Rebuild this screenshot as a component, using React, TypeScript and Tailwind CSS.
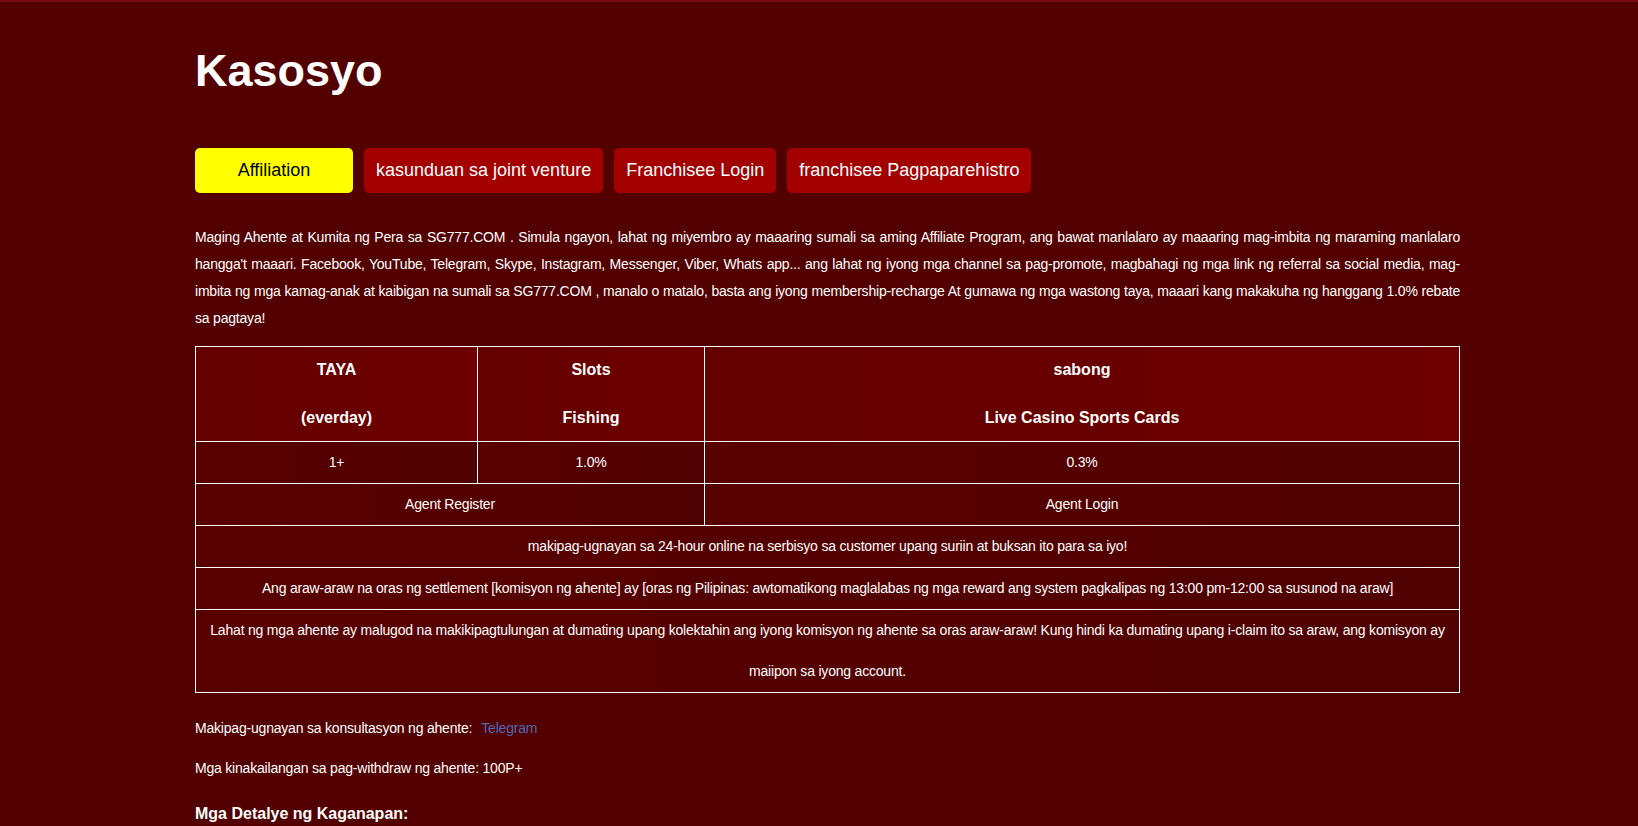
import React from "react";

const tabs = [
  { label: "Affiliation", active: true },
  { label: "kasunduan sa joint venture", active: false },
  { label: "Franchisee Login", active: false },
  { label: "franchisee Pagpaparehistro", active: false },
];

const cell = "border border-white text-center align-middle";
const headCell = `${cell} bg-gradient-to-r from-[#630000] to-[#6e0000] font-bold text-[16px] leading-[24px] py-[11px]`;
const bodyCell = `${cell} bg-gradient-to-r from-[#590000] to-[#4f0000] text-[14px] tracking-[-0.2px] leading-[41px] px-[10px]`;

export default function App() {
  return (
    <div
      className="min-h-[826px] w-full bg-[#520000] border-t-2 border-[#7a0a10] text-white"
      style={{ fontFamily: '"Liberation Sans", Arial, Helvetica, sans-serif' }}
    >
      <div className="ml-[195px] w-[1265px] pt-[46px]">
        <h1 className="text-[45px] font-bold leading-none">Kasosyo</h1>

        <div className="mt-[55px] flex gap-[11px]">
          {tabs.map((t) => (
            <button
              key={t.label}
              className={
                t.active
                  ? "min-w-[158px] h-[45px] rounded-[5px] bg-[#ffff00] px-[12px] text-[18px] text-black"
                  : "h-[45px] rounded-[5px] bg-[#a30000] px-[12px] text-[18px] text-white"
              }
            >
              {t.label}
            </button>
          ))}
        </div>

        <p className="mt-[31px] text-justify text-[14px] tracking-[-0.2px] leading-[27px]">
          Maging Ahente at Kumita ng Pera sa SG777.COM . Simula ngayon, lahat ng miyembro ay maaaring sumali sa aming
          Affiliate Program, ang bawat manlalaro ay maaaring mag-imbita ng maraming manlalaro hangga't maaari. Facebook,
          YouTube, Telegram, Skype, Instagram, Messenger, Viber, Whats app... ang lahat ng iyong mga channel sa
          pag-promote, magbahagi ng mga link ng referral sa social media, mag-imbita ng mga kamag-anak at kaibigan na
          sumali sa SG777.COM , manalo o matalo, basta ang iyong membership-recharge At gumawa ng mga wastong taya,
          maaari kang makakuha ng hanggang 1.0% rebate sa pagtaya!
        </p>

        <table className="mt-[14px] w-full border-collapse table-fixed">
          <colgroup>
            <col className="w-[282px]" />
            <col className="w-[227px]" />
            <col />
          </colgroup>
          <tbody>
            <tr>
              <td className={headCell}>
                TAYA
                <br />
                <br />
                (everday)
              </td>
              <td className={headCell}>
                Slots
                <br />
                <br />
                Fishing
              </td>
              <td className={headCell}>
                sabong
                <br />
                <br />
                Live Casino Sports Cards
              </td>
            </tr>
            <tr>
              <td className={bodyCell}>1+</td>
              <td className={bodyCell}>1.0%</td>
              <td className={bodyCell}>0.3%</td>
            </tr>
            <tr>
              <td className={bodyCell} colSpan={2}>
                Agent Register
              </td>
              <td className={bodyCell}>Agent Login</td>
            </tr>
            <tr>
              <td className={bodyCell} colSpan={3}>
                makipag-ugnayan sa 24-hour online na serbisyo sa customer upang suriin at buksan ito para sa iyo!
              </td>
            </tr>
            <tr>
              <td className={bodyCell} colSpan={3}>
                Ang araw-araw na oras ng settlement [komisyon ng ahente] ay [oras ng Pilipinas: awtomatikong maglalabas
                ng mga reward ang system pagkalipas ng 13:00 pm-12:00 sa susunod na araw]
              </td>
            </tr>
            <tr>
              <td className={bodyCell} colSpan={3}>
                Lahat ng mga ahente ay malugod na makikipagtulungan at dumating upang kolektahin ang iyong komisyon ng
                ahente sa oras araw-araw! Kung hindi ka dumating upang i-claim ito sa araw, ang komisyon ay maiipon sa
                iyong account.
              </td>
            </tr>
          </tbody>
        </table>

        <p className="mt-[22px] text-[14px] tracking-[-0.2px] leading-[27px]">
          Makipag-ugnayan sa konsultasyon ng ahente:
          <a className="ml-[9px] text-[#5366b8]">Telegram</a>
        </p>
        <p className="mt-[13px] text-[14px] tracking-[-0.2px] leading-[27px]">
          Mga kinakailangan sa pag-withdraw ng ahente: 100P+
        </p>
        <h3 className="mt-[20px] text-[16px] font-bold leading-[24px]">Mga Detalye ng Kaganapan:</h3>
      </div>
    </div>
  );
}
